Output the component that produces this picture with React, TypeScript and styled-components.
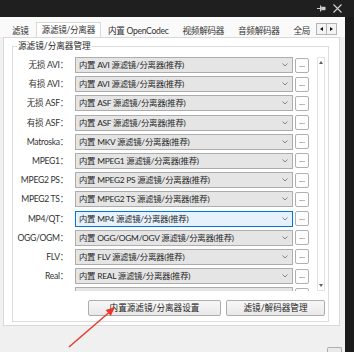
import React from 'react';
import styled, { createGlobalStyle } from 'styled-components';

const GlobalStyle = createGlobalStyle`
  html, body {
    margin: 0;
    padding: 0;
  }
  body {
    font-family: Lato, "Noto Sans CJK SC", sans-serif;
    font-size: 8.6px;
    color: #1e1e1e;
    background: #f0f0f0;
    text-spacing-trim: space-all;
  }
  * {
    box-sizing: border-box;
  }
`;

const Window = styled.div`
  position: relative;
  width: 354px;
  height: 352px;
  overflow: hidden;
  display: grid;
  grid-template-columns: 345px 9px;
  grid-template-rows: 17px 1fr;
  background: #f0f0f0;
`;

const TitleBar = styled.div`
  grid-column: 1 / 3;
  background: #1f1f1f;
  display: flex;
  justify-content: flex-end;
  align-items: center;
  gap: 7px;
  padding-right: 12px;
`;

const DarkEdge = styled.div`
  background: #1b1b1b;
`;

const Main = styled.div`
  display: flex;
  flex-direction: column;
  background: #f0f0f0;
`;

const TabStrip = styled.div`
  height: 20px;
  display: flex;
  align-items: flex-end;
  padding-left: 5px;
  background: #fafafa;
`;

const TabList = styled.div`
  flex: 1;
  height: 100%;
  display: flex;
  align-items: flex-end;
  overflow: hidden;
`;

const Tab = styled.div<{ $active?: boolean }>`
  flex-shrink: 0;
  white-space: nowrap;
  letter-spacing: -0.3px;
  padding: ${(p) => (p.$active ? '0 5px' : '0 6px')};
  height: ${(p) => (p.$active ? '16px' : '13px')};
  line-height: ${(p) => (p.$active ? '14px' : '13px')};
  color: #333;
  background: ${(p) => (p.$active ? '#fff' : 'transparent')};
  border: ${(p) => (p.$active ? '1px solid #d9d9d9' : '1px solid transparent')};
  border-bottom: none;
  margin-bottom: ${(p) => (p.$active ? '-1px' : '0')};
  position: relative;
  z-index: ${(p) => (p.$active ? 1 : 0)};
`;

const TabArrows = styled.div`
  display: flex;
  margin: 0 8px 2px 0;
`;

const ArrowButton = styled.div<{ $dir: 'left' | 'right' }>`
  width: 11px;
  height: 12px;
  border: 1px solid #b4b4b4;
  background: #f4f4f4;
  display: flex;
  align-items: center;
  justify-content: center;
  margin-left: ${(p) => (p.$dir === 'right' ? '-1px' : '0')};

  &::after {
    content: '';
    border-top: 2.5px solid transparent;
    border-bottom: 2.5px solid transparent;
    ${(p) =>
      p.$dir === 'left'
        ? 'border-right: 3px solid #111;'
        : 'border-left: 3px solid #111;'}
  }
`;

const Panel = styled.div`
  height: 289px;
  margin: 0 5px 0 3px;
  border: 1px solid #d9d9d9;
  background: #fff;
  padding: 3px 10px 3px 8px;
`;

const GroupBox = styled.fieldset`
  margin: 0;
  height: 100%;
  min-width: 0;
  border: 1px solid #dcdcdc;
  padding: 5px 3px 5px 0;
`;

const GroupTitle = styled.legend`
  padding: 0 1px;
  margin-left: 4px;
  line-height: 11px;
  color: #1e1e1e;
`;

const ListArea = styled.div`
  display: flex;
  gap: 8px;
  height: 234px;
`;

const Rows = styled.div`
  width: 296px;
  overflow: hidden;
  display: grid;
  grid-auto-rows: 16px;
  row-gap: 3.2px;
`;

const Row = styled.div`
  display: grid;
  grid-template-columns: 60px 218px 14px;
  column-gap: 2px;
  align-items: center;
`;

const Label = styled.div`
  text-align: right;
  white-space: nowrap;
  line-height: 16px;
  letter-spacing: -0.3px;
  padding-right: 5px;
  color: #333;
`;

const Combo = styled.div<{ $focused?: boolean }>`
  height: 16px;
  display: flex;
  align-items: center;
  justify-content: space-between;
  padding: 0 4px 0 3px;
  border: 1px solid ${(p) => (p.$focused ? '#0078d7' : '#adadad')};
  background: ${(p) => (p.$focused ? '#e5f1fb' : '#e5e5e5')};
  color: #262626;
  font-size: 8.4px;
  line-height: 14px;
  letter-spacing: -0.25px;
  white-space: nowrap;
  overflow: hidden;
`;

const DotsButton = styled.div`
  height: 15px;
  border: 1px solid #b0b0b0;
  border-radius: 2px;
  background: #fdfdfd;
  color: #555;
  font-size: 8px;
  line-height: 11px;
  text-align: center;
`;

const ScrollBar = styled.div`
  width: 8px;
  border: 1px solid #e2e2e2;
  background: #fff;
  display: flex;
  flex-direction: column;
  justify-content: space-between;
  align-items: center;
  padding: 3px 0;
`;

const ScrollArrow = styled.div<{ $up?: boolean }>`
  border-left: 2.5px solid transparent;
  border-right: 2.5px solid transparent;
  ${(p) =>
    p.$up ? 'border-bottom: 3px solid #606060;' : 'border-top: 3px solid #606060;'}
`;

const ButtonRow = styled.div`
  display: flex;
  justify-content: flex-end;
  gap: 5px;
  margin-top: 9px;
`;

const PushButton = styled.div<{ $width: number }>`
  width: ${(p) => p.$width}px;
  height: 16px;
  border: 1px solid #adadad;
  border-radius: 2px;
  background: linear-gradient(#f7f7f7, #e9e9e9);
  color: #222;
  text-align: center;
  line-height: 14px;
  white-space: nowrap;
`;

const BottomBar = styled.div`
  flex: 1;
  display: flex;
  justify-content: flex-end;
  align-items: flex-end;
  padding-right: 3px;
`;

const PeekButton = styled.div`
  width: 15px;
  height: 5px;
  border: 1px solid #adadad;
  border-bottom: none;
  border-radius: 2px 2px 0 0;
  background: #e9e9e9;
`;

const Overlay = styled.svg`
  position: absolute;
  left: 0;
  top: 0;
  pointer-events: none;
`;

const Chevron = () => (
  <svg width="6" height="4" viewBox="0 0 6 4">
    <path d="M0.5 0.5 L3 3 L5.5 0.5" fill="none" stroke="#777" strokeWidth="0.9" />
  </svg>
);

const rows = [
  { label: '无损 AVI：', value: '内置 AVI 源滤镜/分离器(推荐)' },
  { label: '有损 AVI：', value: '内置 AVI 源滤镜/分离器(推荐)' },
  { label: '无损 ASF：', value: '内置 ASF 源滤镜/分离器(推荐)' },
  { label: '有损 ASF：', value: '内置 ASF 源滤镜/分离器(推荐)' },
  { label: 'Matroska：', value: '内置 MKV 源滤镜/分离器(推荐)' },
  { label: 'MPEG1：', value: '内置 MPEG1 源滤镜/分离器(推荐)' },
  { label: 'MPEG2 PS：', value: '内置 MPEG2 PS 源滤镜/分离器(推荐)' },
  { label: 'MPEG2 TS：', value: '内置 MPEG2 TS 源滤镜/分离器(推荐)' },
  { label: 'MP4/QT：', value: '内置 MP4 源滤镜/分离器(推荐)', focused: true },
  { label: 'OGG/OGM：', value: '内置 OGG/OGM/OGV 源滤镜/分离器(推荐)' },
  { label: 'FLV：', value: '内置 FLV 源滤镜/分离器(推荐)' },
  { label: 'Real：', value: '内置 REAL 源滤镜/分离器(推荐)' },
  { label: '', value: '', partial: true },
];

const tabs = ['滤镜', '源滤镜/分离器', '内置 OpenCodec', '视频解码器', '音频解码器', '全局'];

const App = () => {
  return (
    <Window>
      <GlobalStyle />
      <TitleBar>
        <svg width="9" height="7" viewBox="0 0 9 7">
          <path d="M0 3.5 H3" stroke="#cfcfcf" strokeWidth="1" />
          <rect x="3" y="0.5" width="1.2" height="6" fill="#cfcfcf" />
          <rect x="4.2" y="1.8" width="4.3" height="3.4" fill="#cfcfcf" />
        </svg>
        <svg width="9" height="9" viewBox="0 0 9 9">
          <path d="M0.5 0.5 L8.5 8.5 M8.5 0.5 L0.5 8.5" stroke="#cfcfcf" strokeWidth="1.1" />
        </svg>
      </TitleBar>
      <Main>
        <TabStrip>
          <TabList>
            {tabs.map((t, i) => (
              <Tab key={t} $active={i === 1}>
                {t}
              </Tab>
            ))}
          </TabList>
          <TabArrows>
            <ArrowButton $dir="left" />
            <ArrowButton $dir="right" />
          </TabArrows>
        </TabStrip>
        <Panel>
          <GroupBox>
            <GroupTitle>源滤镜/分离器管理</GroupTitle>
            <ListArea>
              <Rows>
                {rows.map((r, i) => (
                  <Row key={i}>
                    <Label>{r.label}</Label>
                    <Combo $focused={r.focused}>
                      <span>{r.value}</span>
                      <Chevron />
                    </Combo>
                    <DotsButton>{r.partial ? '' : '...'}</DotsButton>
                  </Row>
                ))}
              </Rows>
              <ScrollBar>
                <ScrollArrow $up />
                <ScrollArrow />
              </ScrollBar>
            </ListArea>
            <ButtonRow>
              <PushButton $width={133}>内置源滤镜/分离器设置</PushButton>
              <PushButton $width={99}>滤镜/解码器管理</PushButton>
            </ButtonRow>
          </GroupBox>
        </Panel>
        <BottomBar>
          <PeekButton />
        </BottomBar>
      </Main>
      <DarkEdge />
      <Overlay width="354" height="352" viewBox="0 0 354 352">
        <path d="M69 347 L109 312.5" stroke="#e8392e" strokeWidth="1.5" fill="none" />
        <polygon points="115,307 110.8,315.9 105.6,309.9" fill="#e8392e" />
      </Overlay>
    </Window>
  );
};

export default App;
